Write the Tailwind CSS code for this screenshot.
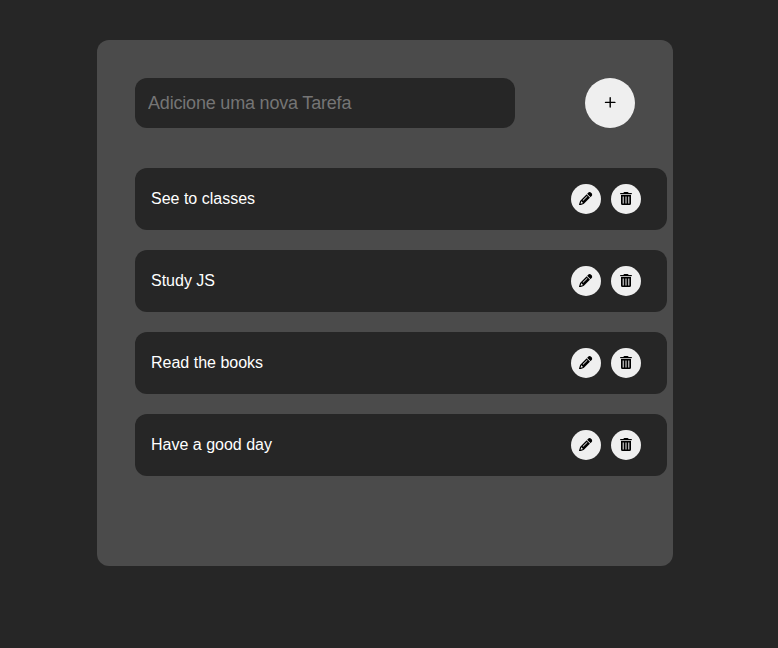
<!DOCTYPE html>
<html lang="pt-BR">
<head>
<meta charset="utf-8">
<title>Tarefas</title>
<script src="https://cdn.jsdelivr.net/npm/@tailwindcss/browser@4"></script>
</head>
<body class="h-[648px] overflow-hidden bg-[#262626] pt-10 pl-[97px] font-['Liberation_Sans',Arial,sans-serif]">
<svg class="hidden">
  <symbol id="pencil" viewBox="0 0 512 512"><path d="M410.3 231l11.3-11.3-33.9-33.9-62.1-62.1L291.7 89.8l-11.3 11.3-22.6 22.6L58.6 322.9c-10.4 10.4-18 23.3-22.2 37.4L1 480.7c-2.5 8.4-.2 17.5 6.1 23.7s15.3 8.5 23.7 6.1l120.3-35.4c14.1-4.2 27-11.8 37.4-22.2L387.7 253.7 410.3 231zM160 399.4l-9.1 22.7c-4 3.1-8.5 5.4-13.3 6.9L59.4 452l23-78.1c1.4-4.9 3.8-9.4 6.9-13.3l22.7-9.1v32c0 8.8 7.2 16 16 16h32zM362.7 18.7L348.3 33.2 325.7 55.8 314.3 67.1l33.9 33.9 62.1 62.1 33.9 33.9 11.3-11.3 22.6-22.6 14.5-14.5c25-25 25-65.5 0-90.5L453.3 18.7c-25-25-65.5-25-90.5 0zm-47.4 168l-144 144c-6.2 6.2-16.4 6.2-22.6 0s-6.2-16.4 0-22.6l144-144c6.2-6.2 16.4-6.2 22.6 0s6.2 16.4 0 22.6z"/></symbol>
  <symbol id="trash" viewBox="0 0 12 13"><path fill-rule="evenodd" d="M3.6 .5Q3.8 0 4.4 0H7.6Q8.2 0 8.4 .5L8.6 1H11.2Q12 1 12 1.6T11.2 2.2H.8Q0 2.2 0 1.6T.8 1H3.4zM1 3H11V11.5Q11 13 9.5 13H2.5Q1 13 1 11.5zM2.7 4.6V11.4H3.7V4.6zM5.5 4.6V11.4H6.5V4.6zM8.3 4.6V11.4H9.3V4.6z"/></symbol>
</svg>
<main class="h-[526px] w-[576px] rounded-xl bg-[#4b4b4b] pt-[38px] pr-1.5 pl-[38px]">
  <form class="flex justify-between pr-8">
    <input class="h-[50px] w-[380px] rounded-xl bg-[#262626] px-[13px] text-[18px] tracking-[-0.19px] text-white placeholder-[#757575] outline-none" placeholder="Adicione uma nova Tarefa">
    <button type="button" aria-label="Adicionar" class="flex size-[50px] items-center justify-center rounded-full bg-[#efefef]">
      <svg class="mb-0.5 size-3" viewBox="0 0 12 12" fill="none" stroke="#000" stroke-width="1.4" stroke-linecap="round"><path d="M6.2 1.7v9.4M1.5 6.4h9.4"/></svg>
    </button>
  </form>
  <ul class="mt-10 flex flex-col gap-5 text-base text-white">
    <li class="flex h-[62px] items-center rounded-xl bg-[#262626] pr-[26px] pl-4">
      <span class="mr-auto pb-px">See to classes</span>
      <button aria-label="Editar" class="mr-2.5 flex size-[30px] items-center justify-center rounded-full bg-[#efefef]"><svg class="mb-[1.5px] size-[13.33px]"><use href="#pencil"/></svg></button>
      <button aria-label="Excluir" class="flex size-[30px] items-center justify-center rounded-full bg-[#efefef]"><svg class="mb-px h-[13px] w-3"><use href="#trash"/></svg></button>
    </li>
    <li class="flex h-[62px] items-center rounded-xl bg-[#262626] pr-[26px] pl-4">
      <span class="mr-auto pb-px">Study JS</span>
      <button aria-label="Editar" class="mr-2.5 flex size-[30px] items-center justify-center rounded-full bg-[#efefef]"><svg class="mb-[1.5px] size-[13.33px]"><use href="#pencil"/></svg></button>
      <button aria-label="Excluir" class="flex size-[30px] items-center justify-center rounded-full bg-[#efefef]"><svg class="mb-px h-[13px] w-3"><use href="#trash"/></svg></button>
    </li>
    <li class="flex h-[62px] items-center rounded-xl bg-[#262626] pr-[26px] pl-4">
      <span class="mr-auto pb-px">Read the books</span>
      <button aria-label="Editar" class="mr-2.5 flex size-[30px] items-center justify-center rounded-full bg-[#efefef]"><svg class="mb-[1.5px] size-[13.33px]"><use href="#pencil"/></svg></button>
      <button aria-label="Excluir" class="flex size-[30px] items-center justify-center rounded-full bg-[#efefef]"><svg class="mb-px h-[13px] w-3"><use href="#trash"/></svg></button>
    </li>
    <li class="flex h-[62px] items-center rounded-xl bg-[#262626] pr-[26px] pl-4">
      <span class="mr-auto pb-px">Have a good day</span>
      <button aria-label="Editar" class="mr-2.5 flex size-[30px] items-center justify-center rounded-full bg-[#efefef]"><svg class="mb-[1.5px] size-[13.33px]"><use href="#pencil"/></svg></button>
      <button aria-label="Excluir" class="flex size-[30px] items-center justify-center rounded-full bg-[#efefef]"><svg class="mb-px h-[13px] w-3"><use href="#trash"/></svg></button>
    </li>
  </ul>
</main>
</body>
</html>
